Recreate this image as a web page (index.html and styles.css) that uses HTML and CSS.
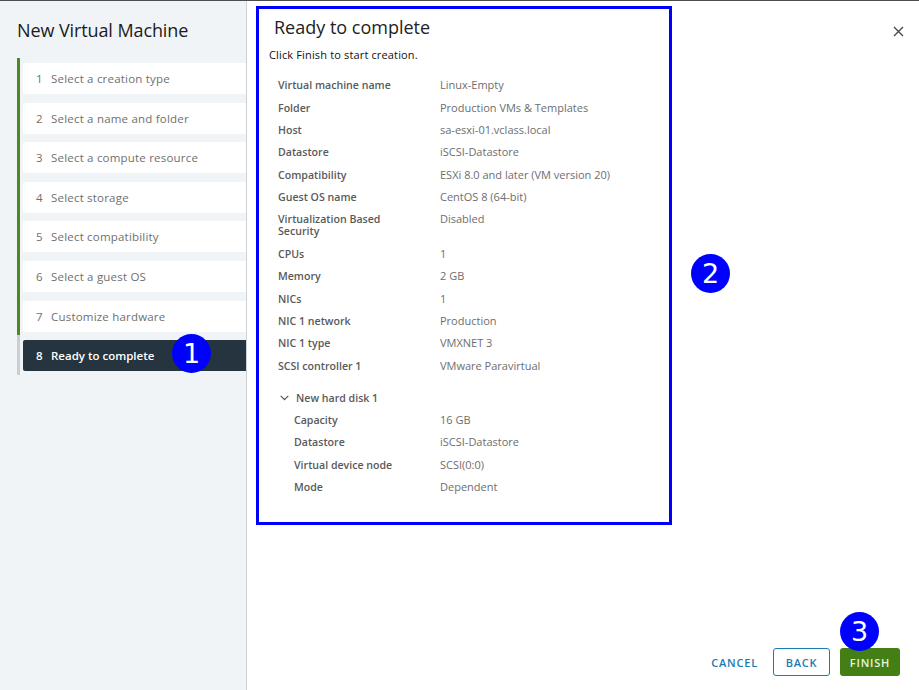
FILE: index.html
```html
<!DOCTYPE html>
<html>
<head>
<meta charset="utf-8">
<link rel="stylesheet" href="styles.css">
</head>
<body>
<div class="dialog">
  <aside class="sidebar">
    <h1 class="title">New Virtual Machine</h1>
    <ol class="steps">
      <li class="step done"><div class="step-box"><span class="num">1</span>Select a creation type</div></li>
      <li class="step done"><div class="step-box"><span class="num">2</span>Select a name and folder</div></li>
      <li class="step done"><div class="step-box"><span class="num">3</span>Select a compute resource</div></li>
      <li class="step done"><div class="step-box"><span class="num">4</span>Select storage</div></li>
      <li class="step done"><div class="step-box"><span class="num">5</span>Select compatibility</div></li>
      <li class="step done"><div class="step-box"><span class="num">6</span>Select a guest OS</div></li>
      <li class="step done"><div class="step-box"><span class="num">7</span>Customize hardware</div></li>
      <li class="step current"><div class="step-box"><span class="num">8</span>Ready to complete</div>
        <span class="badge badge-1">1</span></li>
    </ol>
  </aside>
  <main class="main">
    <div class="top">
      <section class="content">
        <h2 class="page-title">Ready to complete</h2>
        <p class="intro">Click Finish to start creation.</p>
        <div class="summary">
          <div class="row"><div class="label">Virtual machine name</div><div class="value">Linux-Empty</div></div>
          <div class="row"><div class="label">Folder</div><div class="value">Production VMs &amp; Templates</div></div>
          <div class="row"><div class="label">Host</div><div class="value">sa-esxi-01.vclass.local</div></div>
          <div class="row"><div class="label">Datastore</div><div class="value">iSCSI-Datastore</div></div>
          <div class="row"><div class="label">Compatibility</div><div class="value">ESXi 8.0 and later (VM version 20)</div></div>
          <div class="row"><div class="label">Guest OS name</div><div class="value">CentOS 8 (64-bit)</div></div>
          <div class="row two-line"><div class="label">Virtualization Based<br>Security</div><div class="value">Disabled</div></div>
          <div class="row"><div class="label">CPUs</div><div class="value">1</div></div>
          <div class="row"><div class="label">Memory</div><div class="value">2 GB</div></div>
          <div class="row"><div class="label">NICs</div><div class="value">1</div></div>
          <div class="row"><div class="label">NIC 1 network</div><div class="value">Production</div></div>
          <div class="row"><div class="label">NIC 1 type</div><div class="value">VMXNET 3</div></div>
          <div class="row"><div class="label">SCSI controller 1</div><div class="value">VMware Paravirtual</div></div>
          <div class="group-head">
            <svg class="chev" width="9" height="6" viewBox="0 0 9 6"><path d="M0.7 0.8 L4.5 4.6 L8.3 0.8" fill="none" stroke="#565656" stroke-width="1.2"/></svg>
            <span>New hard disk 1</span>
          </div>
          <div class="row sub"><div class="label">Capacity</div><div class="value">16 GB</div></div>
          <div class="row sub"><div class="label">Datastore</div><div class="value">iSCSI-Datastore</div></div>
          <div class="row sub"><div class="label">Virtual device node</div><div class="value">SCSI(0:0)</div></div>
          <div class="row sub"><div class="label">Mode</div><div class="value">Dependent</div></div>
        </div>
      </section>
      <button class="close" aria-label="Close">
        <svg width="11" height="11" viewBox="0 0 11 11"><path d="M1 1 L10 10 M10 1 L1 10" stroke="#444" stroke-width="1.3"/></svg>
      </button>
    </div>
    <span class="badge badge-2">2</span>
    <footer class="footer">
      <button class="btn btn-link">CANCEL</button>
      <button class="btn btn-outline">BACK</button>
      <div class="finish-wrap">
        <span class="badge badge-3">3</span>
        <button class="btn btn-primary">FINISH</button>
      </div>
    </footer>
  </main>
</div>
</body>
</html>
```
FILE: styles.css
```css
* { box-sizing: border-box; }
html, body { margin: 0; padding: 0; }
body {
  width: 919px;
  height: 690px;
  overflow: hidden;
  font-family: "Open Sans", "Liberation Sans", sans-serif;
  background: #fff;
}
.dialog {
  display: flex;
  height: 690px;
  border-top: 1px solid #4d4d4d;
}
.sidebar {
  width: 247px;
  flex: none;
  background: #f0f4f7;
  border-right: 1px solid #ccd3d8;
  padding-left: 17px;
}
.title {
  margin: 18px 0 0 0;
  font-size: 18px;
  font-weight: 400;
  color: #1b1b1b;
  line-height: 22px;
  letter-spacing: -0.1px;
}
.steps {
  list-style: none;
  margin: 17px 0 0 0;
  padding: 0;
}
.step {
  position: relative;
  border-left: 3px solid #4a8a1e;
  padding: 5px 0 3.6px 3px;
}
.step.current { border-left-color: #c9ced2; }
.step-box {
  height: 31px;
  background: #fff;
  display: flex;
  align-items: center;
  padding-left: 13px;
  font-size: 11.5px;
  letter-spacing: 0.2px;
  color: #6f6f6f;
  border-radius: 2px 0 0 2px;
}
.num { width: 15px; flex: none; }
.step.current .step-box {
  background: #25343e;
  color: #fff;
  font-weight: 600;
  letter-spacing: 0;
}
.main {
  flex: 1;
  position: relative;
  display: flex;
  flex-direction: column;
}
.top {
  display: flex;
  align-items: flex-start;
  flex: 1;
}
.content {
  margin: 5px 0 0 9px;
  width: 416px;
  height: 519px;
  border: 3px solid #0000ff;
  padding: 0 0 0 10px;
}
.page-title {
  margin: 7px 0 0 5px;
  font-size: 18px;
  font-weight: 400;
  color: #222;
  line-height: 22px;
}
.intro {
  margin: 10px 0 0 0;
  font-size: 11px;
  letter-spacing: 0.15px;
  color: #111;
  line-height: 14px;
}
.summary {
  margin-top: 12px;
  padding-left: 9px;
}
.row {
  display: flex;
  padding: 5.2px 0;
  font-size: 11px;
  line-height: 12px;
}
.row.two-line { padding: 4.7px 0; }
.row.two-line .label { line-height: 12.5px; }
.label {
  width: 162px;
  flex: none;
  font-weight: 600;
  font-size: 10.6px;
  color: #5a5a5a;
}
.value { color: #6e6e6e; }
.row.sub .label { width: 146px; margin-left: 16px; }
.group-head {
  display: flex;
  align-items: center;
  margin-top: 9.6px;
  padding: 5.2px 0;
  font-size: 10.6px;
  line-height: 12px;
  font-weight: 600;
  color: #5a5a5a;
}
.chev { margin: 0 7px 0 2px; }
.close {
  margin: 24px 0 0 auto;
  margin-right: 15px;
  background: none;
  border: 0;
  padding: 0;
  width: 11px;
  height: 11px;
  display: block;
}
.footer {
  display: flex;
  justify-content: flex-end;
  align-items: center;
  padding: 0 19px 14px 0;
}
.btn {
  font-family: inherit;
  font-size: 11px;
  font-weight: 600;
  letter-spacing: 0.8px;
  height: 28px;
  border-radius: 3px;
  cursor: pointer;
}
.btn-link {
  background: none;
  border: 0;
  color: #1a7ab3;
  padding: 0;
  margin-right: 15px;
}
.btn-outline {
  background: #fff;
  border: 1px solid #1a7ab3;
  color: #1a7ab3;
  width: 57px;
  padding: 0;
  margin-right: 10px;
}
.finish-wrap { position: relative; }
.btn-primary {
  background: #437f14;
  border: 0;
  color: #e8f3e0;
  width: 60px;
  padding: 0;
  display: block;
}
.badge {
  position: absolute;
  width: 39px;
  height: 39px;
  border-radius: 50%;
  background: #0000ff;
  color: #fff;
  font-family: "DejaVu Sans", sans-serif;
  font-size: 27px;
  line-height: 39px;
  text-align: center;
}
.badge-1 { left: 152px; top: -1px; }
.badge-2 { left: 444px; top: 253px; }
.badge-3 { left: 0; top: -36px; }
```
